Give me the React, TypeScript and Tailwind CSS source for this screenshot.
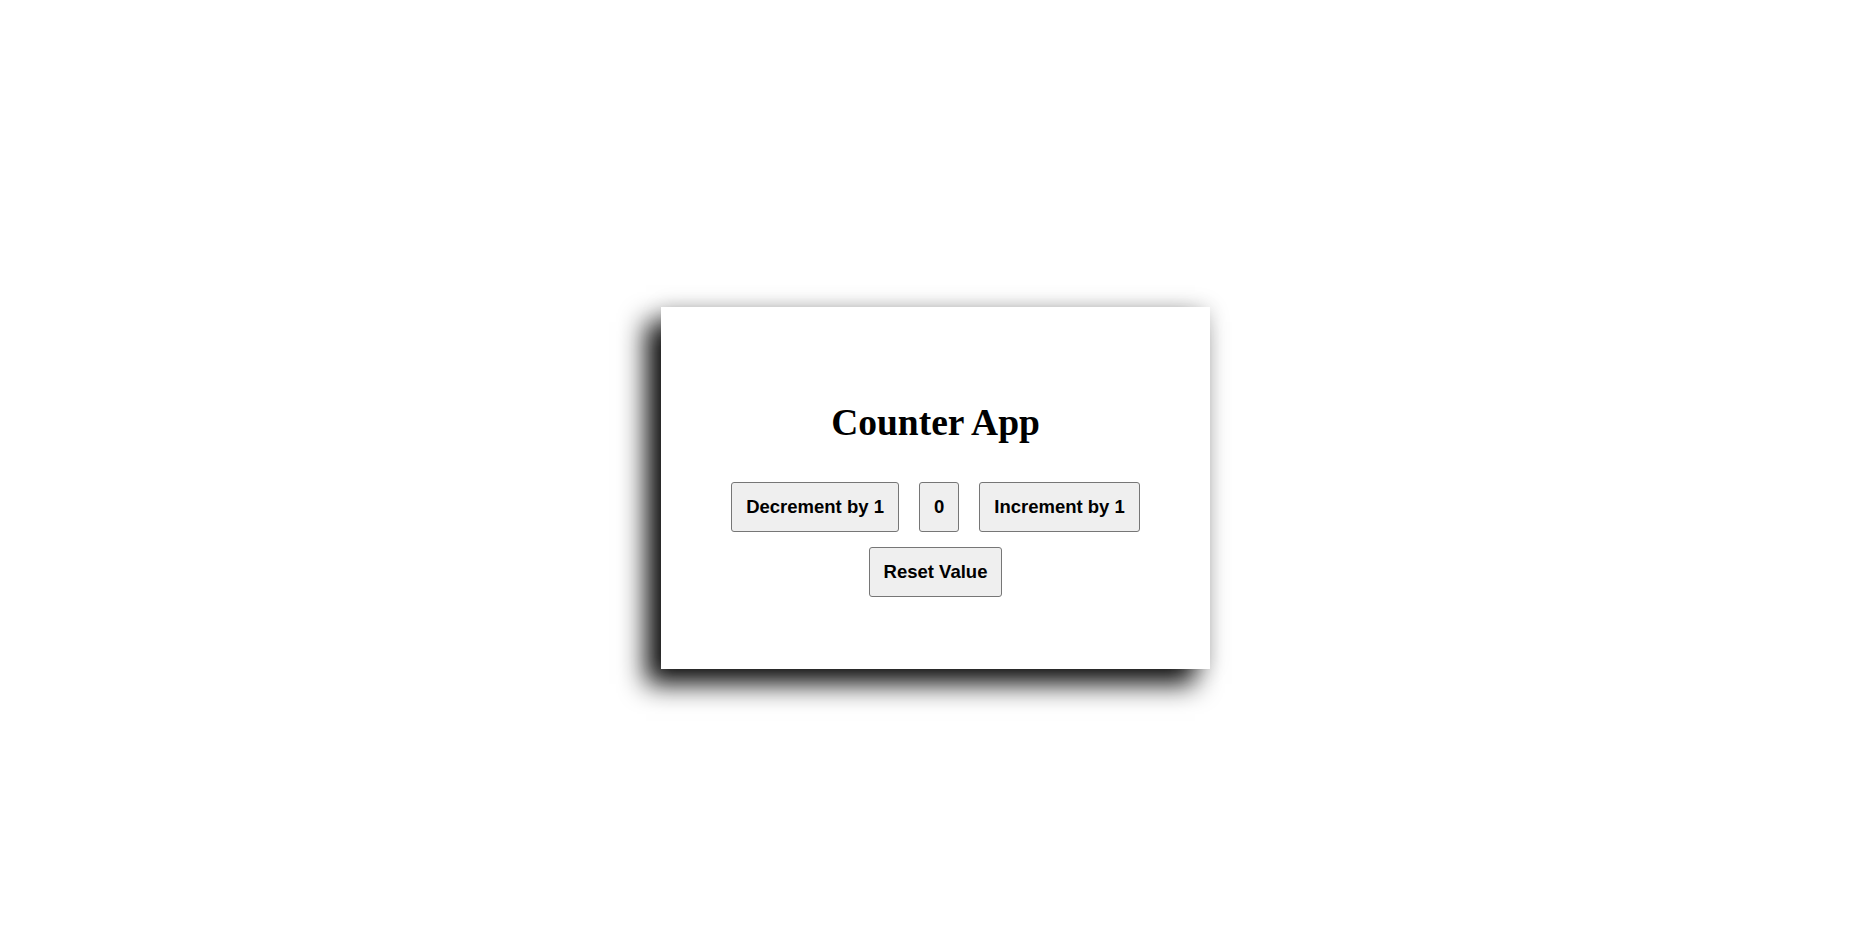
import { useState } from "react";

// Plain browser-style button, scaled up
const CounterButton = ({ label, onClick }: { label: string | number; onClick?: () => void }) => (
  <button
    onClick={onClick}
    className="rounded-[3px] border border-[#767676] bg-[#efefef] px-[14px] py-[13px] font-['Liberation_Sans',Arial,sans-serif] text-[18.5px] font-bold leading-[22px] text-black"
  >
    {label}
  </button>
);

export default function App() {
  const [count, setCount] = useState(0);

  return (
    <div className="flex min-h-screen w-full justify-center bg-white pr-[3px] pt-[307px]">
      <div className="flex h-[362px] w-[549px] flex-col items-center bg-white pt-[95px] shadow-[-15px_15px_25px_rgba(0,0,0,0.95),0_0_20px_rgba(0,0,0,0.15)]">
        <h1 className="font-['Liberation_Serif','Times_New_Roman',serif] text-[37.5px] font-bold leading-[41px] text-black">
          Counter App
        </h1>
        <div className="mt-[39px] flex gap-[20px]">
          <CounterButton label="Decrement by 1" onClick={() => setCount(count - 1)} />
          <CounterButton label={count} />
          <CounterButton label="Increment by 1" onClick={() => setCount(count + 1)} />
        </div>
        <div className="mt-[15px]">
          <CounterButton label="Reset Value" onClick={() => setCount(0)} />
        </div>
      </div>
    </div>
  );
}
